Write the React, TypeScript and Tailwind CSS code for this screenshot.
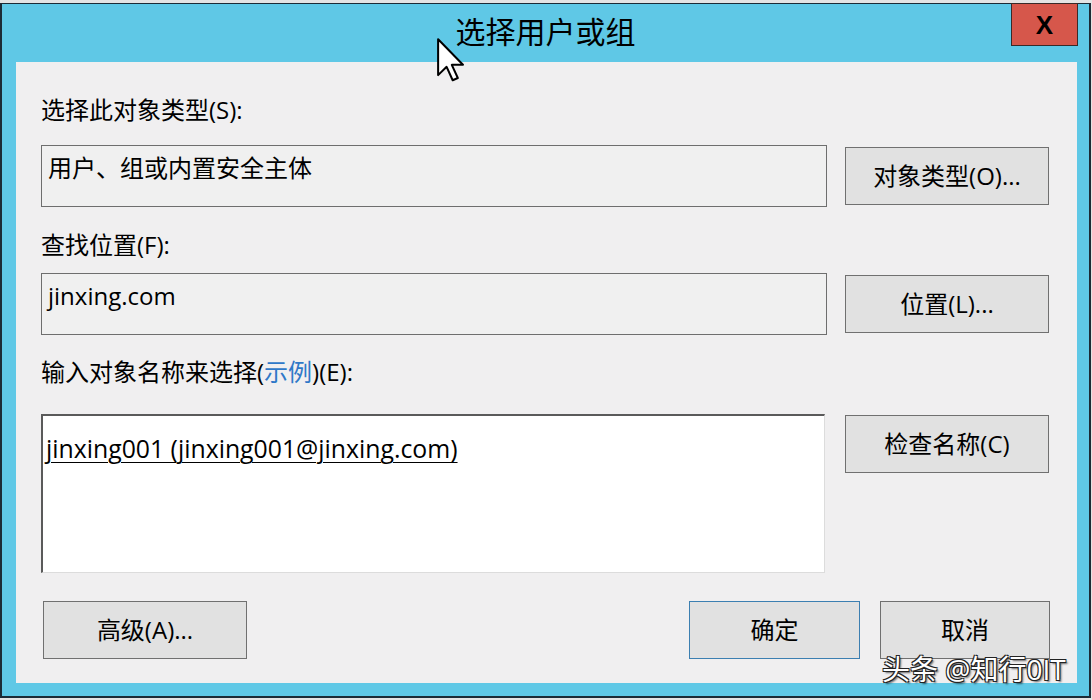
const font = { fontFamily: '"Open Sans", "Noto Sans CJK SC", sans-serif' }

const Btn = ({ label, className = '' }: { label: string; className?: string }) => (
    <div className={`flex items-center justify-center bg-[#e1e1e1] border border-[#707070] text-[24px] leading-[32px] text-black ${className}`}>
        {label}
    </div>
)

const Cursor = () => (
    <svg className="absolute left-[435px] top-[33px]" width="28" height="46" viewBox="0 0 12.5 19.5">
        <path d="M0.5 0.5 L0.5 16.5 L4.3 12.8 L7 18.8 L9.3 17.8 L6.6 11.9 L11.6 11.9 Z" fill="#fff" stroke="#000" strokeWidth="0.9" strokeLinejoin="round" />
    </svg>
)

export default function App() {
    return (
        <div className="w-[1092px] h-[700px] bg-[#e4e4e4] pt-[3px]" style={font}>
            <div className="relative w-[1091px] h-[695px] bg-[#5fc8e6] border-l-2 border-t border-r-2 border-b-2 border-[#1c2b36] flex flex-col">
                {/* title bar */}
                <div className="relative h-[58px] flex items-center justify-center">
                    <span className="text-[30px] leading-[40px] text-black mt-[-2px]">选择用户或组</span>
                    <div className="absolute right-[11px] top-[-1px] w-[67px] h-[43px] bg-[#d6574b] border border-[#3a2a28] flex items-center justify-center">
                        <span className="text-[26px] font-bold text-black leading-none" style={{ fontFamily: '"Liberation Sans", sans-serif' }}>X</span>
                    </div>
                </div>
                <Cursor />

                {/* content */}
                <div className="ml-[14px] mr-[12px] h-[621px] bg-[#f0eff0] pl-[25px] pr-[27px] pt-[32px] flex flex-col">
                    <div className="h-[32px] text-[24px] leading-[32px] text-black">选择此对象类型(S):</div>
                    <div className="mt-[19px] flex items-center gap-[18px]">
                        <div className="w-[786px] h-[62px] border border-[#6e6e6e] bg-[#f0f0f0] pl-[6px] pt-[6px] text-[24px] leading-[32px] text-black">用户、组或内置安全主体</div>
                        <Btn label="对象类型(O)..." className="w-[204px] h-[58px]" />
                    </div>

                    <div className="mt-[22px] h-[32px] text-[24px] leading-[32px] text-black">查找位置(F):</div>
                    <div className="mt-[12px] flex items-center gap-[18px]">
                        <div className="w-[786px] h-[62px] border border-[#6e6e6e] bg-[#f0f0f0] pl-[6px] pt-[6px] text-[24px] leading-[32px] text-black">jinxing.com</div>
                        <Btn label="位置(L)..." className="w-[204px] h-[58px]" />
                    </div>

                    <div className="mt-[21px] h-[32px] text-[24px] leading-[32px] text-black">
                        输入对象名称来选择(<span className="text-[#2f78c8]">示例</span>)(E):
                    </div>
                    <div className="mt-[26px] flex items-start gap-[20px]">
                        <div className="w-[784px] h-[159px] bg-white border-l-2 border-t-2 border-[#5a5a5a] border-r border-b border-r-[#dcdcdc] border-b-[#dcdcdc] pl-[3px] pt-[16px] text-[24.8px] leading-[32px] text-black">
                            <span className="underline decoration-1 underline-offset-[4px]">jinxing001 (jinxing001@jinxing.com)</span>
                        </div>
                        <Btn label="检查名称(C)" className="w-[204px] h-[58px] mt-[1px]" />
                    </div>

                    <div className="mt-[28px] flex items-center">
                        <Btn label="高级(A)..." className="w-[204px] h-[58px] ml-[2px]" />
                        <div className="flex-1" />
                        <Btn label="确定" className="w-[171px] h-[58px] !border-[#3c7fb1]" />
                        <Btn label="取消" className="w-[170px] h-[58px] ml-[20px]" />
                    </div>
                </div>

                {/* watermark */}
                <div
                    className="absolute left-[880px] top-[647px] text-[28px] leading-[36px] text-white"
                    style={{ textShadow: '1px 1px 0 #222, -1px -1px 0 #222, 1px -1px 0 #222, -1px 1px 0 #222, 2px 2px 2px rgba(0,0,0,.6)' }}
                >
                    头条 @知行0IT
                </div>
            </div>
        </div>
    )
}
